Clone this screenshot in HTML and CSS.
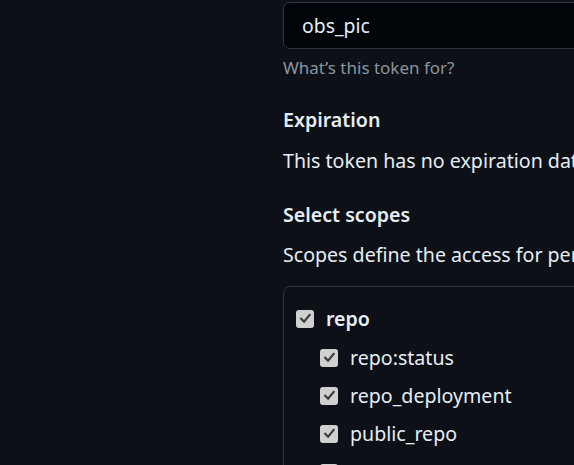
FILE: index.html
```html
<!DOCTYPE html>
<html lang="en">
<head>
<meta charset="utf-8">
<title>New personal access token</title>
<link rel="stylesheet" href="styles.css">
</head>
<body>
<div class="layout">
  <aside class="sidebar"></aside>
  <main class="content">
    <div class="field">
      <input class="text-input" type="text" value="obs_pic" aria-label="Note">
      <p class="note">What’s this token for?</p>
    </div>
    <div class="field">
      <h3 class="label first">Expiration</h3>
      <p class="desc">This token has no expiration date. To set a new expiration date, you must regenerate the token.</p>
    </div>
    <div class="field">
      <h3 class="label second">Select scopes</h3>
      <p class="desc">Scopes define the access for personal tokens. Read more about OAuth scopes.</p>
    </div>
    <div class="scopes">
      <div class="row top">
        <span class="cb"><svg viewBox="0 0 18 18"><path d="M5.2 8.7 8.1 11.7 13.6 5" /></svg></span>
        <span class="name strong">repo</span>
      </div>
      <div class="row sub">
        <span class="cb"><svg viewBox="0 0 18 18"><path d="M5.2 8.7 8.1 11.7 13.6 5" /></svg></span>
        <span class="name">repo:status</span>
      </div>
      <div class="row sub">
        <span class="cb"><svg viewBox="0 0 18 18"><path d="M5.2 8.7 8.1 11.7 13.6 5" /></svg></span>
        <span class="name">repo_deployment</span>
      </div>
      <div class="row sub">
        <span class="cb"><svg viewBox="0 0 18 18"><path d="M5.2 8.7 8.1 11.7 13.6 5" /></svg></span>
        <span class="name">public_repo</span>
      </div>
      <div class="row sub">
        <span class="cb"><svg viewBox="0 0 18 18"><path d="M5.2 8.7 8.1 11.7 13.6 5" /></svg></span>
        <span class="name">repo:invite</span>
      </div>
    </div>
  </main>
</div>
</body>
</html>
```
FILE: styles.css
```css
html, body {
  margin: 0;
  padding: 0;
  background: #0d1117;
  overflow: hidden;
  height: 465px;
}
body {
  font-family: "Noto Sans", "Open Sans", sans-serif;
  color: #e6edf3;
  font-size: 19.6px;
}
.layout {
  display: flex;
}
.sidebar {
  flex: 0 0 283px;
}
.content {
  flex: 0 0 700px;
  padding-top: 2px;
}
.text-input {
  display: block;
  box-sizing: border-box;
  width: 420px;
  height: 47px;
  margin: 0;
  padding: 0 18px;
  background: #010409;
  border: 1px solid #30363d;
  border-radius: 7px;
  color: #e6edf3;
  font-family: inherit;
  font-size: 19.4px;
  outline: none;
}
.note {
  margin: 7px 0 0;
  font-size: 17px;
  line-height: 24px;
  color: #8b949e;
  white-space: nowrap;
}
.label {
  margin: 0;
  font-size: 19.6px;
  font-weight: 600;
  line-height: 28px;
  white-space: nowrap;
}
.label.first {
  margin-top: 26px;
}
.label.second {
  margin-top: 26px;
}
.desc {
  margin: 12.5px 0 0;
  line-height: 28px;
  white-space: nowrap;
}
.scopes {
  margin-top: 17px;
  width: 600px;
  border: 1px solid #30363d;
  border-radius: 7px;
  padding: 13px 0 0 12px;
  box-sizing: border-box;
  height: 300px;
}
.row {
  display: flex;
  align-items: center;
  height: 38.4px;
}
.row.sub {
  padding-left: 24px;
}
.cb {
  flex: 0 0 18px;
  width: 18px;
  height: 18px;
  border-radius: 3px;
  background: #d0d0d0;
  margin-right: 12px;
  display: block;
}
.cb svg {
  display: block;
  width: 18px;
  height: 18px;
  fill: none;
  stroke: #3a3a3a;
  stroke-width: 2.2;
  stroke-linecap: square;
}
.name {
  line-height: 24px;
  white-space: nowrap;
}
.strong {
  font-weight: 600;
}
```
